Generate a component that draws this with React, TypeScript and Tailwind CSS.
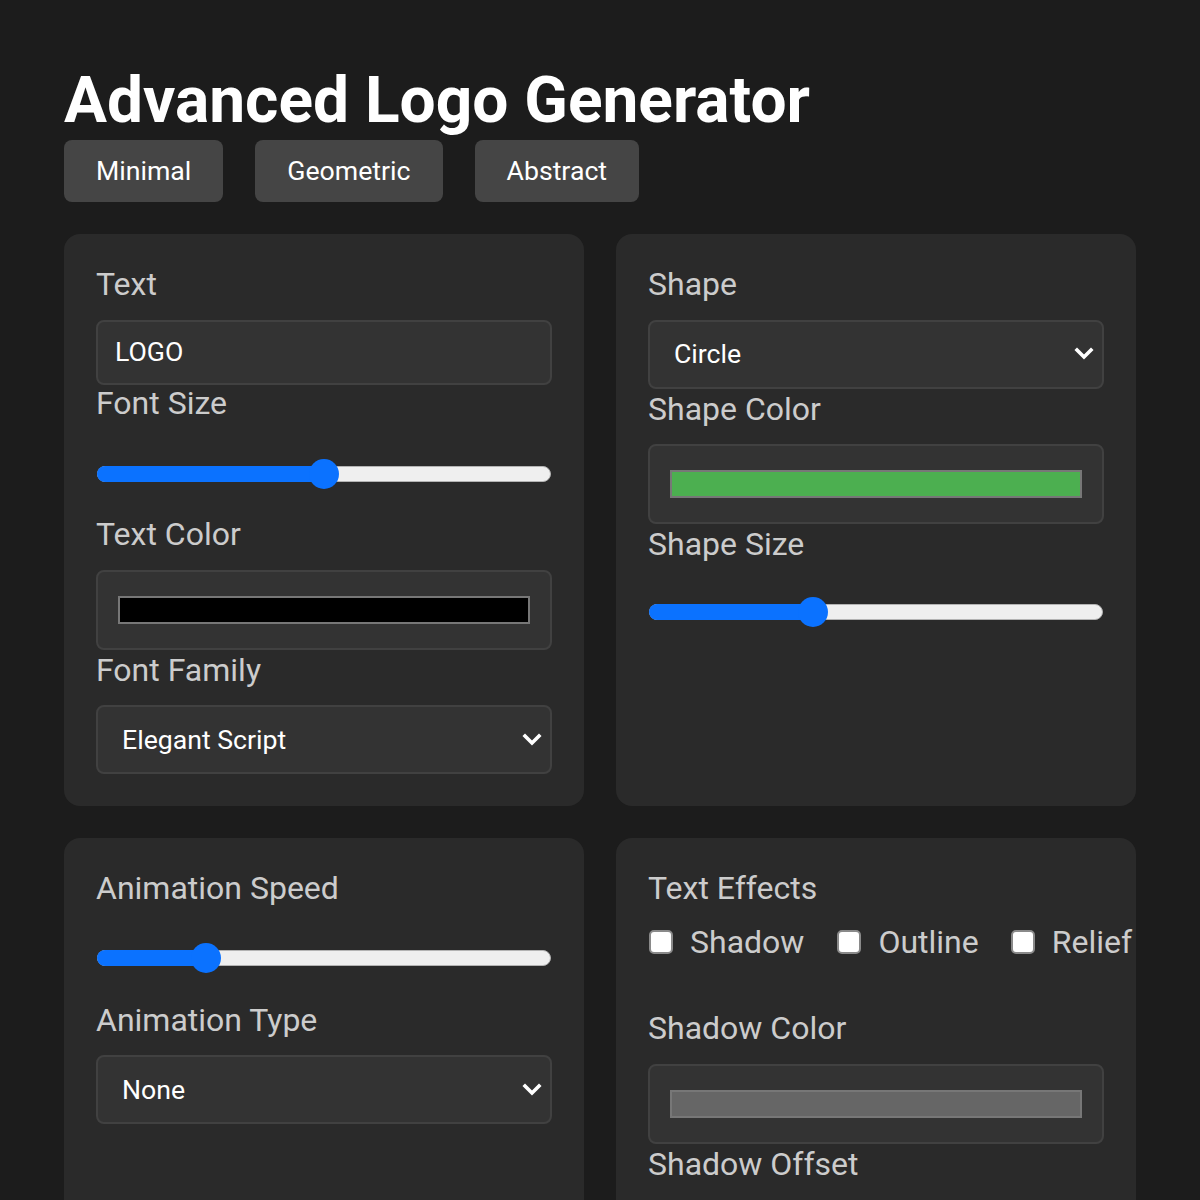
import type { ReactNode } from 'react';

function Label({ children, className = '' }: { children: ReactNode; className?: string }) {
  return <div className={`text-[32px] leading-[37.5px] text-[#cccccc] ${className}`}>{children}</div>;
}

function TextInput({ value }: { value: string }) {
  return (
    <div className="mt-4 flex h-[65px] items-center rounded-lg border-2 border-[#414141] bg-[#333333] pl-[17px] text-[26.67px] text-white">
      {value}
    </div>
  );
}

function Select({ value, className = '' }: { value: string; className?: string }) {
  return (
    <div
      className={`mt-4 flex h-[69px] items-center justify-between rounded-lg border-2 border-[#414141] bg-[#333333] pl-6 pr-[8px] text-[26.67px] text-white ${className}`}
    >
      <span>{value}</span>
      <svg width="20" height="14" viewBox="0 0 20 14" fill="none">
        <polyline points="3,3 10,10 17,3" stroke="white" strokeWidth="3.6" strokeLinecap="square" />
      </svg>
    </div>
  );
}

function ColorBox({ color }: { color: string }) {
  return (
    <div className="mb-[2px] mt-4 flex h-[80px] items-center rounded-lg border-2 border-[#414141] bg-[#333333] px-5">
      <div className="h-[28px] w-full border-2 border-[#777777]" style={{ backgroundColor: color }} />
    </div>
  );
}

function Slider({ value, className = '' }: { value: number; className?: string }) {
  // value 0..1, thumb travels inside the track
  const left = `calc(15px + (100% - 30px) * ${value})`;
  return (
    <div className={`h-[94px] px-px ${className}`}>
      <div className="relative h-4 rounded-full border border-[#b3b3b3] bg-[#efefef]">
        <div className="absolute -left-px -top-px h-4 rounded-full bg-[#0b72ff]" style={{ width: left }} />
        <div
          className="absolute top-1/2 h-[30px] w-[30px] -translate-x-1/2 -translate-y-1/2 rounded-full bg-[#0b72ff]"
          style={{ left }}
        />
      </div>
    </div>
  );
}

function Check({ label, className = '' }: { label: string; className?: string }) {
  return (
    <div className={`flex items-center ${className}`}>
      <span className="ml-px h-6 w-6 rounded-[5px] border-2 border-[#8a8a8a] bg-white" />
      <span className="ml-[17px] text-[32px] leading-[37.5px] text-[#cccccc]">{label}</span>
    </div>
  );
}

export default function App() {
  return (
    <div className="min-h-screen bg-[#1c1c1c] px-16 pb-16 pt-[63px] font-['Roboto','Liberation_Sans',sans-serif]">
      <h1 className="text-[64px] font-bold leading-[75px] text-white">Advanced Logo Generator</h1>

      <div className="mt-[2px] flex gap-8">
        {['Minimal', 'Geometric', 'Abstract'].map((s) => (
          <button key={s} className="h-[62px] rounded-lg bg-[#454545] px-8 text-[26.67px] text-white">
            {s}
          </button>
        ))}
      </div>

      <div className="mt-8 grid w-[1072px] grid-cols-2 gap-8">
        <section className="flex flex-col rounded-2xl bg-[#2a2a2a] p-8">
          <Label>Text</Label>
          <TextInput value="LOGO" />
          <Label>Font Size</Label>
          <Slider value={0.5} className="pt-[44px]" />
          <Label>Text Color</Label>
          <ColorBox color="#000000" />
          <Label>Font Family</Label>
          <Select value="Elegant Script" />
        </section>

        <section className="flex flex-col rounded-2xl bg-[#2a2a2a] p-8">
          <Label>Shape</Label>
          <Select value="Circle" className="mb-[2px]" />
          <Label>Shape Color</Label>
          <ColorBox color="#4caf50" />
          <Label>Shape Size</Label>
          <Slider value={0.35} className="pt-[40px]" />
        </section>

        <section className="flex flex-col rounded-2xl bg-[#2a2a2a] p-8">
          <Label>Animation Speed</Label>
          <Slider value={0.22} className="pt-[42px]" />
          <Label>Animation Type</Label>
          <Select value="None" />
        </section>

        <section className="flex flex-col rounded-2xl bg-[#2a2a2a] p-8">
          <Label>Text Effects</Label>
          <div className="mb-[49px] mt-4 flex h-[37.5px] items-center whitespace-nowrap">
            <Check label="Shadow" />
            <Check label="Outline" className="ml-[32px]" />
            <Check label="Relief" className="ml-[31px]" />
          </div>
          <Label>Shadow Color</Label>
          <ColorBox color="#666666" />
          <Label>Shadow Offset</Label>
          <Slider value={0.25} className="pt-[42px]" />
        </section>
      </div>
    </div>
  );
}
